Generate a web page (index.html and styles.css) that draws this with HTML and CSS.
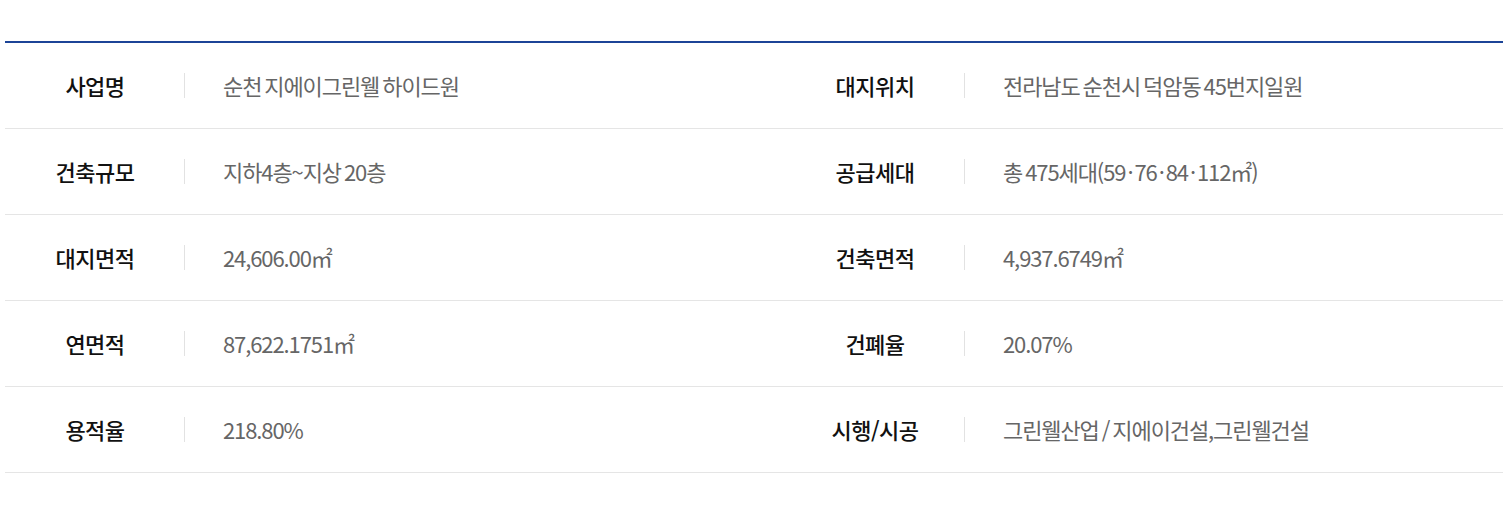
FILE: index.html
```html
<!DOCTYPE html>
<html lang="ko">
<head>
  <meta charset="UTF-8" />
  <title>사업개요</title>
  <link rel="stylesheet" href="styles.css">
</head>
<body>

  <table class="info">
    <colgroup>
      <col class="col-th" />
      <col class="col-td" />
      <col class="col-th" />
      <col />
    </colgroup>
    <tr>
      <th>사업명</th>
      <td>순천 지에이그린웰 하이드원</td>
      <th>대지위치</th>
      <td>전라남도 순천시 덕암동 45번지일원</td>
    </tr>
    <tr>
      <th>건축규모</th>
      <td>지하4층~지상 20층</td>
      <th>공급세대</th>
      <td>총 475세대(59<span class="dot">·</span>76<span class="dot">·</span>84<span class="dot">·</span>112㎡)</td>
    </tr>
    <tr>
      <th>대지면적</th>
      <td>24,606.00㎡</td>
      <th>건축면적</th>
      <td>4,937.6749㎡</td>
    </tr>
    <tr>
      <th>연면적</th>
      <td>87,622.1751㎡</td>
      <th>건폐율</th>
      <td>20.07%</td>
    </tr>
    <tr>
      <th>용적율</th>
      <td>218.80%</td>
      <th>시행/시공</th>
      <td>그린웰산업 / 지에이건설,그린웰건설</td>
    </tr>
  </table>

</body>
</html>
```

FILE: styles.css
```css
body {
  margin: 0;
  background-color: #fff;
  font-family: "Noto Sans CJK KR", "Noto Sans", sans-serif;
}

.info {
  width: 1498px;
  margin: 41px 5px 0;
  border-collapse: collapse;
  table-layout: fixed;
  border-top: 2px solid #1c4497;
}

.col-th {
  width: 180px;
}

.col-td {
  width: 600px;
}

.info tr {
  height: 86px;
  border-bottom: 1px solid #e5e5e5;
}

.info th {
  position: relative;
  padding: 0;
  font-size: 22px;
  font-weight: 500;
  color: #111;
  text-align: center;
  letter-spacing: -0.5px;
}

.info th::after {
  content: "";
  position: absolute;
  right: 0;
  top: 50%;
  width: 1px;
  height: 25px;
  margin-top: -12px;
  background-color: #e2e2e2;
}

.info td {
  padding: 0 0 0 38px;
  font-size: 22px;
  color: #666;
  letter-spacing: -1.1px;
  word-spacing: -2px;
}

.dot {
  margin: 0 2px;
}
```
